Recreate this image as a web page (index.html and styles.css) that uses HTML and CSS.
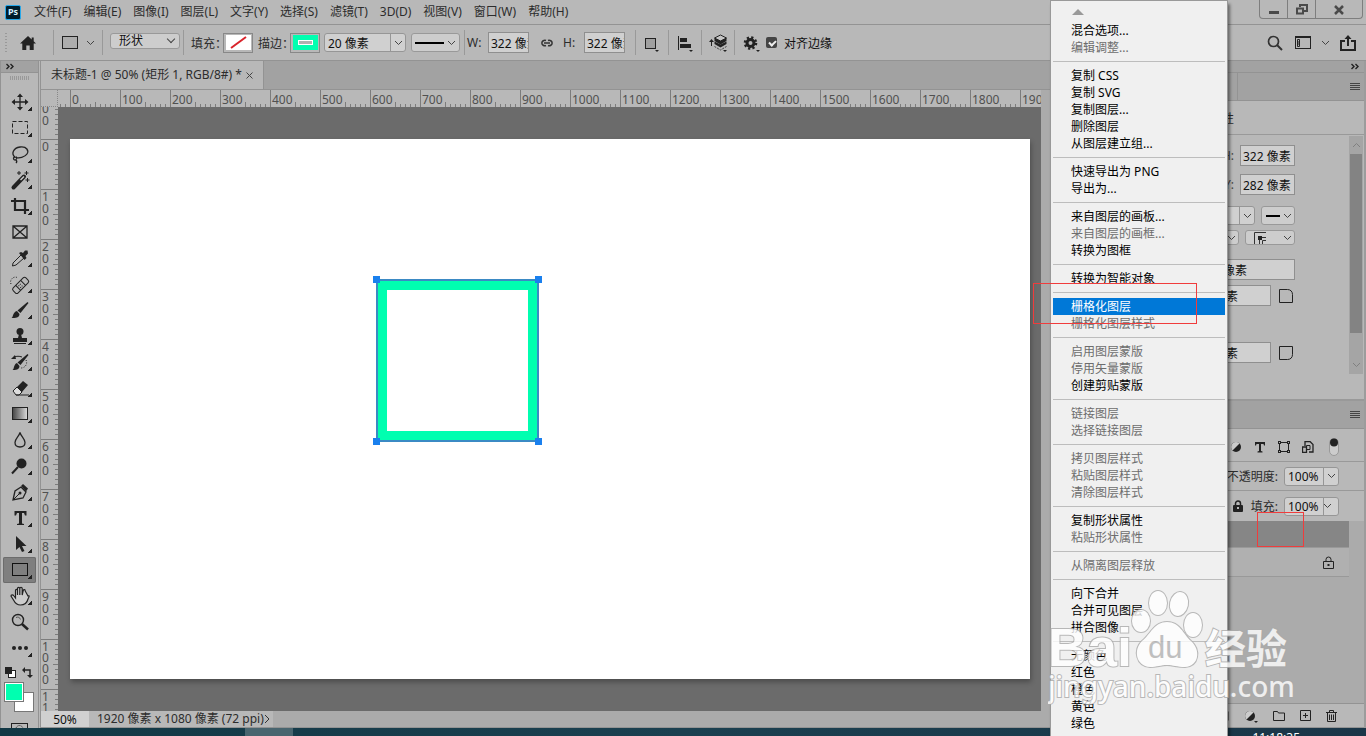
FILE: index.html
```html
<!DOCTYPE html>
<html lang="zh-CN">
<head>
    <meta charset="UTF-8">
    <meta name="viewport" content="width=device-width, initial-scale=1.0">
    <title>未标题-1 @ 50%</title>
    <link rel="stylesheet" href="styles.css">
</head>
<body>

<div class="app">
    <header class="menubar">
        <div class="ps-logo">Ps</div>
        <nav class="menus">
            <button>文件(F)</button>
            <button>编辑(E)</button>
            <button>图像(I)</button>
            <button>图层(L)</button>
            <button>文字(Y)</button>
            <button>选择(S)</button>
            <button>滤镜(T)</button>
            <button>3D(D)</button>
            <button>视图(V)</button>
            <button>窗口(W)</button>
            <button>帮助(H)</button>
        </nav>
        <div class="window-buttons">
            <button aria-label="最小化"><svg width="12" height="14" viewBox="0 0 12 14"><path d="M1 10.500h10" stroke="#4a4a4a" stroke-width="3"/></svg></button>
            <button aria-label="还原"><svg width="14" height="14" viewBox="0 0 14 14"><path d="M5 5V3h7v6H9M2 6.500h6v5H2z" fill="none" stroke="#4a4a4a" stroke-width="2"/></svg></button>
            <button class="close" aria-label="关闭"><svg width="12" height="14" viewBox="0 0 12 14"><path d="M2 4l8 8M10 4l-8 8" stroke="#4a4a4a" stroke-width="2.500"/></svg></button>
        </div>
    </header>

    <section class="options">
        <div class="group g-home">
            <span class="grip"></span>
            <button class="icon" aria-label="主页"><svg width="16" height="14" viewBox="0 0 16 14"><path d="M8 0L0 7.500h2.300V14h4V9.500h3.400V14h4V7.500H16l-2.300-2.200V1.500h-2v2z" fill="#222"/></svg></button>
        </div>
        <div class="group g-shape">
            <svg width="16" height="13" viewBox="0 0 16 13"><rect x="0.500" y="0.500" width="15" height="12" fill="#adadad" stroke="#222"/></svg>
            <svg class="chev" width="9" height="6" viewBox="0 0 9 6"><path d="M1 1l3.500 3.500L8 1"/></svg>
        </div>
        <div class="group g-mode">
            <select class="box" aria-label="工具模式"><option>形状</option></select>
        </div>
        <div class="group g-paint">
            <span class="lbl">填充：</span>
            <button class="swatch" aria-label="填充颜色"><svg width="25" height="15" viewBox="0 0 25 15"><rect width="25" height="15" fill="#fff"/><path d="M5 13L20 2" stroke="#d9232b" stroke-width="2"/></svg></button>
            <span class="lbl second">描边：</span>
            <button class="swatch" aria-label="描边颜色"><svg width="25" height="15" viewBox="0 0 25 15"><rect width="25" height="15" fill="#00ffb0"/><rect x="5.500" y="5.500" width="14" height="4" fill="#b0b0b0" stroke="#fff"/></svg></button>
            <div class="combo stroke-width">
                <input type="text" value="20 像素" aria-label="描边宽度">
                <button aria-label="展开"><svg class="chev" width="9" height="6" viewBox="0 0 9 6"><path d="M1 1l3.500 3.500L8 1"/></svg></button>
            </div>
            <button class="box line-type" aria-label="描边类型">
                <span class="line"></span>
                <svg class="chev" width="9" height="6" viewBox="0 0 9 6"><path d="M1 1l3.500 3.500L8 1"/></svg>
            </button>
        </div>
        <div class="group g-size">
            <label for="optW">W:</label>
            <input class="field" type="text" id="optW" value="322 像素">
            <svg class="link" width="14" height="8" viewBox="0 0 14 8"><path d="M6 1.500A3 2.700 0 1 0 6 6.500M8 1.500A3 2.700 0 1 1 8 6.500M4 4h6" fill="none" stroke="#333" stroke-width="1.500"/></svg>
            <label for="optH">H:</label>
            <input class="field" type="text" id="optH" value="322 像素">
        </div>
        <div class="group g-icon">
            <button class="icon" aria-label="路径操作"><svg width="16" height="18" viewBox="0 0 16 18"><rect x="1.500" y="4.500" width="10" height="10" fill="#a0a0a0" stroke="#222"/><path d="M11 16h4l-2 2z" fill="#222"/></svg></button>
        </div>
        <div class="group g-icon">
            <button class="icon" aria-label="路径对齐方式"><svg width="16" height="18" viewBox="0 0 16 18"><path d="M1.500 2v14" stroke="#222"/><path d="M3 4h7v4H3zM3 10h11v4H3zM12 16h4l-2 2z" fill="#222"/></svg></button>
        </div>
        <div class="group g-icon">
            <button class="icon" aria-label="路径排列方式"><svg width="20" height="18" viewBox="0 0 20 18"><path d="M3.500 12V7" stroke="#222"/><path d="M1 8l2.500-3L6 8z" fill="#222"/><path d="M6.500 7.500v2.500l6 3.500 6-3.500V7.500l-6 3z" fill="#222"/><path d="M12.500 1l6 3-6 3-6-3z" fill="#c4c4c4" stroke="#222"/><path d="M6.500 4v3l6 3.500 6-3.500V4l-6 3z" fill="#222"/><path d="M6.500 12.500l6 3.500 6-3.500" fill="none" stroke="#444" stroke-dasharray="2 1"/><path d="M15 16h4l-2 2z" fill="#222"/></svg></button>
        </div>
        <div class="group g-align">
            <button class="icon" aria-label="设置"><svg width="18" height="18" viewBox="0 0 18 18"><circle cx="7.500" cy="9" r="3.500" fill="none" stroke="#222" stroke-width="3"/><circle cx="7.500" cy="9" r="5.600" fill="none" stroke="#222" stroke-width="2.400" stroke-dasharray="2.200 2.200"/><path d="M13 16h4l-2 2z" fill="#222"/></svg></button>
            <label class="check"><input type="checkbox" checked>对齐边缘</label>
        </div>
        <div class="app-icons">
            <button class="icon" aria-label="搜索"><svg width="16" height="16" viewBox="0 0 16 16"><circle cx="6.500" cy="6.500" r="5" fill="none" stroke="#333" stroke-width="1.700"/><path d="M10 10l5 5" stroke="#333" stroke-width="2"/></svg></button>
            <button class="icon" aria-label="工作区"><svg width="16" height="13" viewBox="0 0 16 13"><rect x="0.500" y="0.500" width="15" height="12" fill="none" stroke="#222"/><path d="M0 1h16" stroke="#222" stroke-width="2"/><path d="M2.500 3.500h2v7h-2zM2.500 6h2M2.500 8h2" fill="none" stroke="#222"/></svg></button>
            <svg class="chev" width="9" height="6" viewBox="0 0 9 6"><path d="M1 1l3.500 3.500L8 1"/></svg>
            <button class="icon" aria-label="共享"><svg width="16" height="16" viewBox="0 0 16 16"><path d="M5 6H1v9h14V6h-4M8 11V2" fill="none" stroke="#222" stroke-width="2"/><path d="M4.500 4L8 0l3.500 4z" fill="#222"/></svg></button>
        </div>
    </section>

    <main class="workspace">
        <aside class="toolbar">
            <div class="collapse"><svg width="8" height="7" viewBox="0 0 8 7"><path d="M0.500 1L3 3.500 0.500 6M4.500 1L7 3.500 4.500 6" fill="none" stroke="#222" stroke-width="1.400"/></svg></div>
            <div class="tool-grip"></div>
            <button class="tool" aria-label="移动工具"><svg viewBox="0 0 22 22"><path d="M11 4v14M4 11h14" stroke="#222" stroke-width="1.300"/><path d="M8 6l3-3.500L14 6zM8 16l3 3.500L14 16zM6 8l-3.500 3L6 14zM16 8l3.500 3L16 14z" fill="#222"/></svg></button>
            <button class="tool" aria-label="矩形选框工具"><svg viewBox="0 0 22 22"><rect x="3.500" y="4.500" width="15" height="12" fill="none" stroke="#222" stroke-dasharray="4 2"/></svg></button>
            <button class="tool" aria-label="套索工具"><svg viewBox="0 0 22 22"><path d="M6 14C2 11 4 5 11 4s9 4 7 7-8 5-12 3c-2 0-2 3 0 3s2-3 1-3M7 17c1 1 1 2 0 3" fill="none" stroke="#222" stroke-width="1.300"/></svg></button>
            <button class="tool" aria-label="魔棒工具"><svg viewBox="0 0 22 22"><path d="M4.500 18.500l10.500-11" stroke="#222" stroke-width="4" stroke-linecap="round"/><path d="M11.500 11l3.500-3.500" stroke="#ccc" stroke-width="1.500"/><path d="M10 2v4M8 4h4M17.500 2v4M15.500 4h4M18.500 9v4M16.500 11h4" stroke="#222"/></svg></button>
            <button class="tool" aria-label="裁剪工具"><svg viewBox="0 0 22 22"><path d="M2 6h14v13M6 3v12h14" fill="none" stroke="#222" stroke-width="2.200"/></svg></button>
            <button class="tool no-more" aria-label="图框工具"><svg viewBox="0 0 22 22"><path d="M4 5h14v12H4zM4 5l14 12M18 5L4 17" fill="none" stroke="#222" stroke-width="1.300"/></svg></button>
            <button class="tool" aria-label="吸管工具"><svg viewBox="0 0 22 22"><path d="M12 8l3 3-8 7-3.500 1L4 16z" fill="#bbb" stroke="#222"/><path d="M10 6l2-1 2 1 2-2.500 2.500 0 .5 3L16.500 9l1 2-2 2z" fill="#222"/></svg></button>
            <button class="tool" aria-label="修复画笔工具"><svg viewBox="0 0 22 22"><g transform="rotate(-45 12 12)"><rect x="2.500" y="8.500" width="18" height="7" rx="2" fill="none" stroke="#222"/><path d="M8 8.500v7M15 8.500v7" stroke="#222"/><path d="M9.500 11h4M9.500 13.500h4" stroke="#222" stroke-dasharray="1 1"/></g><path d="M2 11C0 7 5 2 9 5" fill="none" stroke="#222" stroke-dasharray="1 1.500"/></svg></button>
            <button class="tool" aria-label="画笔工具"><svg viewBox="0 0 22 22"><path d="M18.500 3l1 1-8 10-3-2.500zM8 12l2.500 3c0 4-4 4-8 4 2-1 1-6 5.500-7z" fill="#222"/></svg></button>
            <button class="tool" aria-label="仿制图章工具"><svg viewBox="0 0 22 22"><circle cx="11" cy="6.500" r="3.500" fill="#222"/><path d="M10 9h2l1 4h5v4H4v-4h5z" fill="#222"/><path d="M5 18.500h12" stroke="#222"/></svg></button>
            <button class="tool" aria-label="历史记录画笔工具"><svg viewBox="0 0 22 22"><path d="M18.500 3l1 1-8 10-3-2.500zM8 12l2.500 3c0 4-4 4-7 4 2-1 1-6 4.500-7zM2 8l4-4 1 4z" fill="#222"/><path d="M5 6c3-1 5-1 8 0" fill="none" stroke="#222"/><path d="M17 9c2 4-1 8-5 8" fill="none" stroke="#222" stroke-dasharray="1 1.500"/></svg></button>
            <button class="tool" aria-label="橡皮擦工具"><svg viewBox="0 0 22 22"><path d="M4 14l4-4 5 5-3 3H7z" fill="#ddd" stroke="#222"/><path d="M8 10l6-6 5 4-6 7zM7 17.500h13v1H7z" fill="#222"/></svg></button>
            <button class="tool" aria-label="渐变工具"><svg viewBox="0 0 22 22"><defs><linearGradient id="grad"><stop offset="0" stop-color="#444"/><stop offset="1" stop-color="#ddd"/></linearGradient></defs><rect x="3.500" y="4.500" width="15" height="12" fill="url(#grad)" stroke="#222"/></svg></button>
            <button class="tool" aria-label="模糊工具"><svg viewBox="0 0 22 22"><path d="M11 3.500c1 4 5 6 5 10 0 3-2 4.500-5 4.500S6 16.500 6 13.500c0-4 4-6 5-10z" fill="none" stroke="#222" stroke-width="1.300"/></svg></button>
            <button class="tool" aria-label="减淡工具"><svg viewBox="0 0 22 22"><circle cx="12.500" cy="8.500" r="5" fill="#222"/><path d="M9 12l-6 6.500" stroke="#222" stroke-width="2"/></svg></button>
            <button class="tool" aria-label="钢笔工具"><svg viewBox="0 0 22 22"><path d="M4 19l2-9 6-4 5 5-3 6z" fill="none" stroke="#222" stroke-width="1.300"/><path d="M12 5l2-2 5 4.500-2 3z" fill="#222"/><circle cx="11" cy="12" r="1.500" fill="#222"/><path d="M4 19l6-6" stroke="#222"/></svg></button>
            <button class="tool" aria-label="文字工具"><svg viewBox="0 0 22 22"><path d="M5.500 4h12v4.500H16L15 6h-2v10.500l2 .5v1H8v-1l2-.5V6H8L7 8.500H5.500z" fill="#222"/></svg></button>
            <button class="tool" aria-label="路径选择工具"><svg viewBox="0 0 22 22"><path d="M7 3v14l3.500-3 2.500 5 2.500-1-2.500-5h4.500z" fill="#222"/></svg></button>
            <button class="tool active" aria-label="矩形工具"><svg viewBox="0 0 22 22"><rect x="3.500" y="4.500" width="15" height="12" fill="none" stroke="#111"/></svg></button>
            <button class="tool" aria-label="抓手工具"><svg viewBox="0 0 22 22"><path d="M6.500 13V5.500c0-1.500 2-1.500 2 0V10 3.500c0-1.500 2.300-1.500 2.300 0V10 3.500c0-1.500 2.400-1.500 2.400 0V10l1-4.500c.5-1.500 2.300-1 2 .5L19 11c2-1 1 1 0 3-1 4-4 6-7.500 6S6 18 4.500 15L2 11c0-1.500 2-1.500 3 0z" fill="#ccc" stroke="#222" stroke-width="1.200"/></svg></button>
            <button class="tool no-more" aria-label="缩放工具"><svg viewBox="0 0 22 22"><circle cx="9" cy="9" r="5.500" fill="none" stroke="#222" stroke-width="1.400"/><path d="M7 6.500c2-1 4 0 4.500 2" fill="none" stroke="#555"/><path d="M13 13l6 5.500" stroke="#222" stroke-width="2.500"/></svg></button>
            <button class="tool" aria-label="编辑工具栏"><svg viewBox="0 0 22 22"><circle cx="5" cy="11" r="2" fill="#222"/><circle cx="11" cy="11" r="2" fill="#222"/><circle cx="17" cy="11" r="2" fill="#222"/></svg></button>
            <div class="swap">
                <svg width="11" height="11" viewBox="0 0 11 11"><rect x="3.500" y="3.500" width="7" height="7" fill="#fff" stroke="#222"/><rect width="7" height="7" fill="#222"/></svg>
                <svg width="11" height="11" viewBox="0 0 11 11"><path d="M2 3h6v6" fill="none" stroke="#222" stroke-width="1.500"/><path d="M0 3l3-3v6zM5 8h6l-3 3z" fill="#222"/></svg>
            </div>
            <div class="colors">
                <button class="bg" aria-label="背景色"></button>
                <button class="fg" aria-label="前景色"></button>
            </div>
            <button class="mask" aria-label="快速蒙版"><svg width="17" height="12" viewBox="0 0 17 12"><rect x="0.500" y="0.500" width="16" height="11" fill="none" stroke="#222"/><circle cx="8.500" cy="6" r="3.500" fill="none" stroke="#222" stroke-dasharray="1 1"/></svg></button>
        </aside>

        <section class="document">
            <div class="tabs">
                <div class="tab">未标题-1 @ 50% (矩形 1, RGB/8#) * <button aria-label="关闭标签"><svg width="7" height="7" viewBox="0 0 7 7"><path d="M0.500 0.500l6 6M6.500 0.500l-6 6" stroke="#444"/></svg></button></div>
            </div>
            <div class="view">
                <div class="corner"></div>
                <div class="ruler-h" id="rulerH"></div>
                <div class="ruler-v" id="rulerV"></div>
                <div class="pasteboard">
                    <div class="artboard">
                        <div class="shape"><i></i><i></i><i></i><i></i></div>
                    </div>
                </div>
                <div class="view-scroll"></div>
            </div>
            <footer class="status">
                <input type="text" value="50%" aria-label="缩放">
                <div class="info">1920 像素 x 1080 像素 (72 ppi)<svg width="6" height="10" viewBox="0 0 6 10"><path d="M1 1l4 4-4 4" fill="none" stroke="#333"/></svg></div>
            </footer>
        </section>

        <aside class="dock">
            <div class="collapse right"><svg width="8" height="7" viewBox="0 0 8 7"><path d="M0.500 1L3 3.500 0.500 6M4.500 1L7 3.500 4.500 6" fill="none" stroke="#222" stroke-width="1.400"/></svg></div>
            <div class="panel-tabs">
                <div class="panel-tab">属性</div>
                <button class="burger" aria-label="面板菜单"></button>
            </div>
            <div class="panel-title"><span>实时形状属性</span></div>
            <div class="props">
                <div class="rows">
                    <div class="row wide"><label for="pH">H:</label><input class="field" type="text" id="pH" value="322 像素"></div>
                    <div class="row wide"><label for="pY">Y:</label><input class="field" type="text" id="pY" value="282 像素"></div>
                    <div class="row stroke">
                        <div class="combo"><input type="text" aria-label="描边宽度"><button aria-label="展开"><svg class="chev" width="9" height="6" viewBox="0 0 9 6"><path d="M1 1l3.500 3.500L8 1"/></svg></button></div>
                        <button class="box" aria-label="描边类型"><span class="line"></span><svg class="chev" width="9" height="6" viewBox="0 0 9 6"><path d="M1 1l3.500 3.500L8 1"/></svg></button>
                    </div>
                    <div class="row ends">
                        <button class="box" aria-label="端点"><span></span><svg class="chev" width="9" height="6" viewBox="0 0 9 6"><path d="M1 1l3.500 3.500L8 1"/></svg></button>
                        <button class="box corner-type" aria-label="角点"><svg width="12" height="12" viewBox="0 0 12 12"><path d="M0.500 12V0.500H12M5.500 12V5.500H12M8.500 12V8.500H12" fill="none" stroke="#333"/><path d="M4 4h4v4H4z" fill="#222"/></svg><svg class="chev" width="9" height="6" viewBox="0 0 9 6"><path d="M1 1l3.500 3.500L8 1"/></svg></button>
                    </div>
                    <div class="row radius"><input class="field" type="text" value="0 像素" aria-label="圆角半径"></div>
                    <div class="row radius corner-row"><input class="field" type="text" value="0 像素" aria-label="右上圆角"><svg width="14" height="14" viewBox="0 0 14 14"><path d="M0.500 0.500h8c3 0 5 2 5 5v8h-13z" fill="none" stroke="#222"/></svg></div>
                    <div class="row radius corner-row last"><input class="field" type="text" value="0 像素" aria-label="右下圆角"><svg width="14" height="14" viewBox="0 0 14 14"><path d="M0.500 0.500h13v8c0 3-2 5-5 5h-8z" fill="none" stroke="#222"/></svg></div>
                </div>
                <div class="scrollbar">
                    <svg width="9" height="6" viewBox="0 0 9 6"><path d="M1 5l3.500-3.500L8 5"/></svg>
                    <span class="thumb"></span>
                    <svg width="9" height="6" viewBox="0 0 9 6"><path d="M1 1l3.500 3.500L8 1"/></svg>
                </div>
            </div>
            <div class="panel-tabs layers-tabs"><button class="burger" aria-label="面板菜单"></button></div>
            <div class="layer-row filter">
                <svg width="12" height="12" viewBox="0 0 12 12"><circle cx="6" cy="6" r="5" fill="#222"/><path d="M2.500 9.500a4.500 4.500 0 0 1 7-7z" fill="#ccc"/></svg>
                <svg width="12" height="12" viewBox="0 0 12 12"><path d="M1 1h10v3.500h-1L9.500 3H7v7l1.500.5v1h-5v-1L5 10V3H2.500L2 4.500H1z" fill="#222"/></svg>
                <svg width="12" height="12" viewBox="0 0 12 12"><path d="M1.500 1.500h9v9h-9z" fill="none" stroke="#222"/><path d="M0 0h3v3H0zM9 0h3v3H9zM0 9h3v3H0zM9 9h3v3H9z" fill="#222"/><path d="M1 1h1v1H1zM10 1h1v1h-1zM1 10h1v1H1zM10 10h1v1h-1z" fill="#bbb"/></svg>
                <svg width="12" height="12" viewBox="0 0 12 12"><path d="M3 5V0.500h5l3 3V11H7M0.500 6h4v5.500h-4z" fill="none" stroke="#222" stroke-width="1.300"/><path d="M4.500 4.500h3.500V8.500H4.500z" fill="none" stroke="#222"/></svg>
                <svg width="10" height="18" viewBox="0 0 10 18"><rect x="0.500" y="0.500" width="9" height="17" rx="4.500" fill="#ccc" stroke="#999"/><circle cx="5" cy="4.500" r="4" fill="#222"/></svg>
            </div>
            <div class="layer-row">
                <label for="opacity">不透明度:</label>
                <div class="combo"><input type="text" id="opacity" value="100%"><button aria-label="展开"><svg class="chev" width="9" height="6" viewBox="0 0 9 6"><path d="M1 1l3.500 3.500L8 1"/></svg></button></div>
            </div>
            <div class="layer-row fill-row">
                <svg width="10" height="12" viewBox="0 0 10 12"><path d="M2.500 6V3.500a2.500 2.500 0 0 1 5 0V6" fill="none" stroke="#222" stroke-width="1.500"/><rect y="5" width="10" height="7" rx="1" fill="#222"/><rect x="4" y="7" width="2" height="2" fill="#bbb"/></svg>
                <label for="fill">填充:</label>
                <div class="combo"><input type="text" id="fill" value="100%"><button aria-label="展开"><svg class="chev" width="9" height="6" viewBox="0 0 9 6"><path d="M1 1l3.500 3.500L8 1"/></svg></button></div>
            </div>
            <div class="layers">
                <div class="layer selected"></div>
                <div class="layer"><svg width="11" height="13" viewBox="0 0 11 13"><path d="M3 5.500V3.500a2.500 2.500 0 0 1 5 0v2M0.500 5.500h10v7H0.500z" fill="none" stroke="#222"/><rect x="4.500" y="8" width="2" height="2" fill="#222"/></svg></div>
            </div>
            <div class="layer-actions">
                <button class="icon" aria-label="蒙版"><svg width="12" height="12" viewBox="0 0 12 12"><path d="M0.500 1.500h11v9H0.500z" fill="#222"/></svg></button>
                <button class="icon" aria-label="调整图层"><svg width="14" height="14" viewBox="0 0 14 14"><circle cx="6" cy="7" r="5" fill="#222"/><path d="M2.500 10.500a4.500 4.500 0 0 1 7-7z" fill="#ccc"/><path d="M10 12h4l-2 2z" fill="#222"/></svg></button>
                <button class="icon" aria-label="新建组"><svg width="12" height="10" viewBox="0 0 12 10"><path d="M0.500 9.500v-9h4l1 1.500h6v7.500z" fill="none" stroke="#222"/></svg></button>
                <button class="icon" aria-label="新建图层"><svg width="11" height="11" viewBox="0 0 11 11"><path d="M0.500 0.500h10v10H0.500zM5.500 3v5M3 5.500h5" fill="none" stroke="#222"/></svg></button>
                <button class="icon" aria-label="删除图层"><svg width="11" height="12" viewBox="0 0 11 12"><path d="M0 2.500h11M3.500 2.500v-2h4v2M1.500 3v8.500h8V3M3.500 4.500v5.500M5.500 4.500v5.500M7.500 4.500v5.500" fill="none" stroke="#222"/></svg></button>
            </div>
        </aside>
    </main>

    <div class="taskbar"><span class="task"></span><span class="clock">11:18:35</span></div>

    <div class="context-menu">
        <div class="up"><svg width="12" height="6" viewBox="0 0 12 6"><path d="M6 0l6 6H0z" fill="#999"/></svg></div>
        <button>混合选项...</button>
        <button disabled>编辑调整...</button>
        <hr>
        <button>复制 CSS</button>
        <button>复制 SVG</button>
        <button>复制图层...</button>
        <button>删除图层</button>
        <button>从图层建立组...</button>
        <hr>
        <button>快速导出为 PNG</button>
        <button>导出为...</button>
        <hr>
        <button>来自图层的画板...</button>
        <button disabled>来自图层的画框...</button>
        <button>转换为图框</button>
        <hr>
        <button>转换为智能对象</button>
        <hr>
        <button class="current">栅格化图层</button>
        <button disabled>栅格化图层样式</button>
        <hr>
        <button disabled>启用图层蒙版</button>
        <button disabled>停用矢量蒙版</button>
        <button>创建剪贴蒙版</button>
        <hr>
        <button disabled>链接图层</button>
        <button disabled>选择链接图层</button>
        <hr>
        <button disabled>拷贝图层样式</button>
        <button disabled>粘贴图层样式</button>
        <button disabled>清除图层样式</button>
        <hr>
        <button>复制形状属性</button>
        <button disabled>粘贴形状属性</button>
        <hr>
        <button disabled>从隔离图层释放</button>
        <hr>
        <button>向下合并</button>
        <button>合并可见图层</button>
        <button>拼合图像</button>
        <hr>
        <button>无颜色</button>
        <button>红色</button>
        <button>橙色</button>
        <button>黄色</button>
        <button>绿色</button>
    </div>

    <div class="mark mark-menu"></div>
    <div class="mark mark-layer"></div>

    <svg class="watermark" width="250" height="120" viewBox="0 0 250 120">
        <g fill="#fff" stroke="#aaa" stroke-width="2" paint-order="stroke">
            <text x="0" y="79" font-size="54" class="wm-bold">Bai</text>
            <ellipse cx="110" cy="16" rx="9" ry="12"/>
            <ellipse cx="131" cy="17" rx="9" ry="12" transform="rotate(12 131 17)"/>
            <ellipse cx="93" cy="34" rx="9" ry="11"/>
            <ellipse cx="145" cy="38" rx="9" ry="12"/>
            <path d="M119 35c13 0 16 12 24 19 10 9 8 25-6 26-8 0-12-2-18-2s-10 2-17 2c-14-1-17-17-8-26 9-7 12-19 25-19z"/>
            <text x="157" y="77" font-size="41" class="wm-cjk">经验</text>
            <text x="0" y="110" font-size="28" class="wm-url">jingyan.baidu.com</text>
        </g>
        <text x="100" y="71" font-size="31" class="wm-du">du</text>
    </svg>
</div>

<script>
    // one ruler segment = 100 document px = 50 screen px
    const rulerH = document.getElementById("rulerH");
    const rulerV = document.getElementById("rulerV");

    function addMark(ruler, text, cls) {
        const mark = document.createElement("div");
        mark.className = "mark-seg " + cls;
        const num = document.createElement("span");
        num.textContent = text;
        mark.appendChild(num);
        ruler.appendChild(mark);
    }

    addMark(rulerH, "", "lead");
    for (let n = 0; n <= 1900; n += 100) {
        addMark(rulerH, n, "");
    }
    addMark(rulerV, "00", "lead");
    for (let n = 0; n <= 1100; n += 100) {
        addMark(rulerV, n, n >= 1000 ? "tight" : "");
    }
</script>

</body>
</html>
```
FILE: styles.css
```css
* {
    box-sizing: border-box;
}
body {
    margin: 0;
    font-family: "Noto Sans", "Noto Sans CJK SC", sans-serif;
    font-size: 12px;
    color: #2c2c2c;
}
button, input, select {
    font: inherit;
    color: inherit;
    margin: 0;
    padding: 0;
    border: none;
    background: none;
}
svg {
    display: block;
    flex: none;
}
.app {
    position: relative;
    display: flex;
    flex-direction: column;
    height: 100vh;
    overflow: hidden;
    background: #b8b8b8;
}

/* menu bar */
.menubar {
    display: flex;
    align-items: center;
    flex: none;
    height: 25px;
    padding-left: 5px;
    border-bottom: 1px solid #939393;
}
.ps-logo {
    width: 16px;
    height: 15px;
    border: 1px solid #26a8ea;
    border-radius: 2px;
    background: #001d2c;
    color: #d5f0ff;
    font-size: 9px;
    font-weight: bold;
    line-height: 12px;
    text-align: center;
}
.menus {
    display: flex;
    gap: 12px;
    padding-left: 13px;
    white-space: nowrap;
}
.menus button {
    line-height: 20px;
}
.window-buttons {
    display: flex;
    align-self: flex-start;
    margin: 0 3px 0 auto;
    height: 19px;
    border: 1px solid #7e7e7e;
    border-top: none;
    border-radius: 0 0 4px 4px;
}
.window-buttons button {
    display: flex;
    align-items: center;
    justify-content: center;
    width: 28px;
    border-right: 1px solid #7e7e7e;
}
.window-buttons .close {
    width: 46px;
    border-right: none;
}

/* options bar */
.options {
    display: flex;
    align-items: center;
    flex: none;
    height: 36px;
    border-bottom: 1px solid #939393;
}
.group {
    display: flex;
    align-items: center;
    flex: none;
    height: 25px;
    border-right: 1px solid #999;
    white-space: nowrap;
}
.g-home {
    width: 54px;
    padding-left: 5px;
    gap: 13px;
}
.grip {
    width: 2px;
    height: 20px;
    background: repeating-linear-gradient(#999 0 1px, transparent 1px 3px);
}
.g-shape {
    width: 49px;
    padding-left: 8px;
    gap: 8px;
}
.g-mode {
    position: relative;
    width: 81px;
    padding-left: 7px;
}
.g-mode::after {
    content: "";
    position: absolute;
    right: 9px;
    top: 6px;
    width: 5px;
    height: 5px;
    border: solid #444;
    border-width: 0 1px 1px 0;
    transform: rotate(45deg);
    pointer-events: none;
}
.g-paint {
    width: 281px;
    padding-left: 7px;
}
.g-size {
    width: 171px;
    padding-left: 2px;
}
.g-icon {
    width: 33px;
    justify-content: center;
}
.g-align {
    padding-left: 8px;
    gap: 5px;
    border-right: none;
}
.icon {
    display: flex;
    align-items: center;
    justify-content: center;
}
.chev {
    fill: none;
    stroke: #444;
    stroke-width: 1;
}
.box {
    display: flex;
    align-items: center;
    justify-content: space-between;
    border: 1px solid #999;
    border-radius: 3px;
    background: #cdcdcd;
}
select.box {
    width: 70px;
    height: 16px;
    margin-bottom: 4px;
    padding-left: 8px;
    line-height: 14px;
    appearance: none;
    color: #111;
}
.lbl {
    width: 32px;
}
.lbl.second {
    margin-left: 5px;
}
.swatch {
    display: flex;
    align-items: center;
    justify-content: center;
    width: 30px;
    height: 20px;
    border: 1px solid #888;
}
.combo {
    display: flex;
    height: 19px;
    border: 1px solid #969696;
    border-radius: 3px;
    background: #d0d0d0;
    color: #111;
}
.combo input {
    flex: 1;
    min-width: 0;
    padding-left: 3px;
}
.combo button {
    display: flex;
    align-items: center;
    justify-content: center;
    width: 15px;
    border-left: 1px solid #969696;
}
.stroke-width {
    width: 82px;
    margin: 0 5px 0 4px;
}
.line-type {
    width: 49px;
    height: 19px;
    padding: 0 3px;
}
.line {
    width: 29px;
    height: 2px;
    background: #000;
}
.field {
    height: 21px;
    padding: 0 0 0 2px;
    border: 1px solid #8f8f8f;
    background: #d0d0d0;
    color: #111;
}
.g-size label {
    width: 17px;
}
.g-size .field {
    width: 41px;
    margin-left: 4px;
}
.g-size .link {
    margin: 0 9px 0 11px;
}
.check {
    display: flex;
    align-items: center;
    gap: 7px;
    color: #111;
}
.check input {
    position: relative;
    appearance: none;
    width: 11px;
    height: 11px;
    border-radius: 2px;
    background: #444;
}
.check input:checked::after {
    content: "";
    position: absolute;
    left: 4px;
    top: 2px;
    width: 3px;
    height: 5px;
    border: solid #eee;
    border-width: 0 2px 2px 0;
    transform: rotate(45deg);
}
.app-icons {
    display: flex;
    align-items: center;
    gap: 12px;
    margin-left: auto;
    padding-right: 10px;
}
.app-icons .chev {
    margin: 0 -2px;
}

/* tools */
.workspace {
    display: flex;
    flex: 1;
    min-height: 0;
}
.toolbar {
    flex: none;
    width: 41px;
    border-left: 1px solid #939393;
    border-right: 3px double #939393;
    overflow: hidden;
}
.collapse {
    display: flex;
    align-items: center;
    height: 12px;
    padding-left: 5px;
    border-bottom: 1px solid #939393;
    background: #a2a2a2;
}
.collapse.right {
    justify-content: flex-end;
    padding-right: 5px;
}
.tool-grip {
    width: 20px;
    height: 4px;
    margin: 3px 0 9px 9px;
    background: repeating-linear-gradient(90deg, #999 0 1px, transparent 1px 2px);
}
.tool {
    position: relative;
    display: flex;
    align-items: center;
    justify-content: center;
    width: 33px;
    height: 26px;
    margin-left: 2px;
    border-radius: 2px;
}
.tool svg {
    width: 22px;
    height: 22px;
}
.tool::after {
    content: "";
    position: absolute;
    right: 4px;
    bottom: 4px;
    width: 4px;
    height: 4px;
    background: linear-gradient(135deg, transparent 50%, #222 50%);
}
.tool.no-more::after {
    display: none;
}
.tool.active {
    background: #7f7f7f;
    box-shadow: inset 0 0 0 1px #6c6c6c;
}
.swap {
    display: flex;
    justify-content: space-between;
    padding: 6px 5px 4px 4px;
}
.colors {
    position: relative;
    height: 31px;
}
.colors button {
    position: absolute;
    width: 20px;
    height: 20px;
    border: 1px solid #777;
}
.colors .fg {
    left: 3px;
    top: 0;
    background: #00ffb0;
    box-shadow: inset 0 0 0 1px #fff;
}
.colors .bg {
    left: 13px;
    top: 10px;
    background: #fff;
}
.mask {
    display: block;
    margin: 10px 0 0 10px;
}

/* document window */
.document {
    display: flex;
    flex-direction: column;
    flex: 1;
    min-width: 0;
}
.tabs {
    flex: none;
    height: 29px;
    border-bottom: 1px solid #939393;
    background: #a2a2a2;
}
.tab {
    display: flex;
    align-items: center;
    justify-content: space-between;
    width: 223px;
    height: 28px;
    padding: 0 10px;
    border-right: 1px solid #939393;
    background: #b8b8b8;
    line-height: 16px;
    white-space: nowrap;
}
.view {
    display: grid;
    grid-template-columns: 17px 1fr 16px;
    grid-template-rows: 17px 1fr;
    flex: 1;
    min-height: 0;
}
.corner {
    border-right: 1px dotted #888;
    border-bottom: 1px dotted #888;
}
.ruler-h {
    display: flex;
    overflow: hidden;
    color: #505050;
}
.ruler-h .mark-seg {
    flex: none;
    width: 50px;
    height: 17px;
    border-left: 1px solid #7c7c7c;
    background: linear-gradient(#7c7c7c, #7c7c7c) 24px 100% / 1px 5px no-repeat,
        repeating-linear-gradient(90deg, transparent 0 4px, #7c7c7c 4px 5px) 0 100% / 100% 3px no-repeat;
}
.ruler-h .lead {
    width: 12px;
    border-left: none;
    background: repeating-linear-gradient(90deg, transparent 0 2px, #7c7c7c 2px 3px, transparent 3px 5px) 0 100% / 100% 3px no-repeat;
}
.ruler-h span {
    display: inline-block;
    height: 17px;
    padding-left: 1px;
    line-height: 19px;
    background: #b8b8b8;
}
.ruler-h .lead span {
    display: none;
}
.ruler-v {
    overflow: hidden;
    color: #505050;
}
.ruler-v .mark-seg {
    height: 50px;
    padding: 1px 0 0 1px;
    border-top: 1px solid #7c7c7c;
    background: linear-gradient(#7c7c7c, #7c7c7c) 100% 24px / 5px 1px no-repeat,
        repeating-linear-gradient(transparent 0 4px, #7c7c7c 4px 5px) 100% 0 / 3px 100% no-repeat;
}
.ruler-v .lead {
    display: flex;
    align-items: flex-end;
    height: 32px;
    padding: 0 0 12px 1px;
    border-top: none;
    background: repeating-linear-gradient(transparent 0 2px, #7c7c7c 2px 3px, transparent 3px 5px) 100% 0 / 3px 100% no-repeat;
}
.ruler-v span {
    display: block;
    width: 8px;
    line-height: 12px;
    word-break: break-all;
}
.ruler-v .tight span {
    line-height: 11px;
}
.pasteboard {
    display: flex;
    padding: 32px 11px 32px 12px;
    background: #6b6b6b;
}
.artboard {
    position: relative;
    flex: 1;
    background: #fff;
    box-shadow: 1px 3px 5px rgba(0, 0, 0, 0.3);
}
.view-scroll {
    grid-column: 3;
    grid-row: 1 / 3;
    background: #ababab;
}
.shape {
    position: absolute;
    left: 306px;
    top: 140px;
    width: 163px;
    height: 163px;
    border: 11px solid #00ffb0;
    outline: 2px solid #3b8ac4;
    outline-offset: -2px;
}
.shape i {
    position: absolute;
    width: 7px;
    height: 7px;
    background: #1a80ee;
}
.shape i:nth-child(1) {
    left: -14px;
    top: -14px;
}
.shape i:nth-child(2) {
    right: -14px;
    top: -14px;
}
.shape i:nth-child(3) {
    left: -14px;
    bottom: -14px;
}
.shape i:nth-child(4) {
    right: -14px;
    bottom: -14px;
}
.status {
    display: flex;
    flex: none;
    height: 17px;
    border-bottom: 1px solid #939393;
    background: #ababab;
}
.status input {
    width: 48px;
    background: #d0d0d0;
    color: #111;
    text-align: center;
}
.status .info {
    display: flex;
    align-items: center;
    justify-content: space-between;
    width: 184px;
    padding: 0 5px 0 8px;
    background: #b8b8b8;
    line-height: 16px;
    white-space: nowrap;
}

/* right panels */
.dock {
    display: flex;
    flex-direction: column;
    flex: none;
    width: 309px;
    border-right: 2px solid #9c9c9c;
}
.dock > div {
    flex: none;
}
.panel-tabs {
    display: flex;
    align-items: center;
    justify-content: space-between;
    height: 28px;
    padding-right: 4px;
    border-bottom: 1px solid #939393;
    background: #a2a2a2;
}
.panel-tab {
    width: 181px;
    padding-left: 10px;
    line-height: 27px;
    border-right: 1px solid #939393;
}
.burger {
    width: 10px;
    height: 7px;
    margin-left: auto;
    background: repeating-linear-gradient(#444 0 1px, transparent 1px 2px);
}
.panel-title {
    height: 34px;
    border-bottom: 1px solid #999;
    line-height: 36px;
}
.panel-title span {
    display: block;
    width: 177px;
    text-align: right;
}
.props {
    display: flex;
    height: 266px;
    padding-right: 1px;
    border-bottom: 2px solid #999;
}
.rows {
    flex: 1;
    padding: 10px 54px 0 0;
}
.row {
    display: flex;
    align-items: center;
    justify-content: flex-end;
    gap: 6px;
    color: #111;
}
.row.wide {
    margin-bottom: 8px;
}
.row label {
    color: #444;
}
.wide .field {
    width: 55px;
}
.stroke {
    margin-top: 11px;
}
.stroke .combo {
    width: 80px;
}
.stroke .box {
    width: 34px;
    height: 19px;
    padding: 0 2px 0 4px;
}
.stroke .line {
    width: 14px;
}
.ends {
    margin: 5px 0 14px;
}
.ends .box {
    width: 50px;
    height: 15px;
    padding: 0 2px 0 8px;
}
.radius .field {
    width: 90px;
    margin-bottom: 5px;
    padding-left: 7px;
}
.radius.corner-row .field {
    width: 75px;
}
.corner-row {
    gap: 8px;
    padding-right: 2px;
}
.corner-row svg {
    margin-bottom: 5px;
}
.corner-row.last {
    margin-top: 31px;
}
.scrollbar {
    display: flex;
    flex-direction: column;
    align-items: center;
    justify-content: space-between;
    width: 14px;
    height: 238px;
    margin-top: 1px;
    padding: 6px 0;
    background: #a5a5a5;
}
.scrollbar svg {
    fill: none;
    stroke: #808080;
}
.thumb {
    width: 12px;
    height: 179px;
    margin-bottom: 24px;
    background: #838383;
}
.layer-row {
    display: flex;
    align-items: center;
    justify-content: flex-end;
    height: 29px;
    padding-right: 25px;
    border-bottom: 1px solid #999;
}
.layer-row .combo {
    width: 55px;
}
.layer-row label {
    margin-right: 6px;
}
.layer-row.filter {
    height: 33px;
    gap: 12px;
    padding: 4px 25px 0 0;
}
.filter svg:last-child {
    margin-left: 3px;
}
.layer-row.fill-row {
    height: 30px;
    border-bottom: none;
}
.fill-row svg {
    margin-right: 8px;
}
.dock > .layers {
    flex: 1;
    background: #ababab;
}
.layer {
    display: flex;
    align-items: center;
    justify-content: flex-end;
    height: 29px;
    margin-right: 15px;
    padding-right: 15px;
    border-bottom: 1px solid #999;
    background: #b0b0b0;
}
.layer.selected {
    height: 27px;
    background: #868686;
}
.layer-actions {
    display: flex;
    align-items: center;
    justify-content: flex-end;
    gap: 15px;
    height: 25px;
    padding-right: 27px;
    border-top: 1px solid #939393;
    border-bottom: 1px solid #939393;
}

.taskbar {
    position: relative;
    flex: none;
    height: 8px;
    background: linear-gradient(90deg, #123845, #1b4050 50%, #1a3648);
    overflow: hidden;
}
.task {
    display: block;
    width: 48px;
    height: 8px;
    margin-left: 245px;
    background: #49656f;
}
.clock {
    position: absolute;
    right: 66px;
    top: 2px;
    color: #fff;
    line-height: 16px;
}

/* layer context menu */
.context-menu {
    position: absolute;
    top: 0;
    right: 138px;
    width: 178px;
    padding: 0 2px 12px;
    border: 1px solid #999;
    background: #f0f0f0;
    box-shadow: 2px 4px 3px rgba(0, 0, 0, 0.45);
}
.context-menu .up {
    height: 21px;
    padding: 8px 0 0 19px;
}
.context-menu button {
    display: block;
    width: 100%;
    height: 17px;
    padding: 1px 0 0 18px;
    line-height: 16px;
    text-align: left;
    color: #000;
    white-space: nowrap;
}
.context-menu button:disabled {
    color: #6d6d6d;
}
.context-menu button.current {
    background: #0078d7;
    color: #fff;
}
.context-menu hr {
    height: 1px;
    margin: 5px 0;
    border: none;
    background: #bdbdbd;
}

/* annotations on top of everything */
.mark {
    position: absolute;
    border: 1px solid #f03c3c;
    pointer-events: none;
}
.mark-menu {
    right: 169px;
    top: 283px;
    width: 164px;
    height: 41px;
}
.mark-layer {
    right: 62px;
    top: 512px;
    width: 47px;
    height: 35px;
}
.watermark {
    position: absolute;
    right: 68px;
    top: 587px;
    opacity: 0.8;
    pointer-events: none;
}
.wm-bold {
    font-family: "Liberation Sans", Arial, sans-serif;
    font-weight: bold;
}
.wm-cjk {
    font-family: "Noto Sans CJK SC", sans-serif;
    font-weight: bold;
}
.wm-url {
    font-family: "Noto Sans", sans-serif;
    font-weight: 500;
}
.wm-du {
    font-family: "Liberation Sans", Arial, sans-serif;
    fill: #b4b4b4;
}
```
